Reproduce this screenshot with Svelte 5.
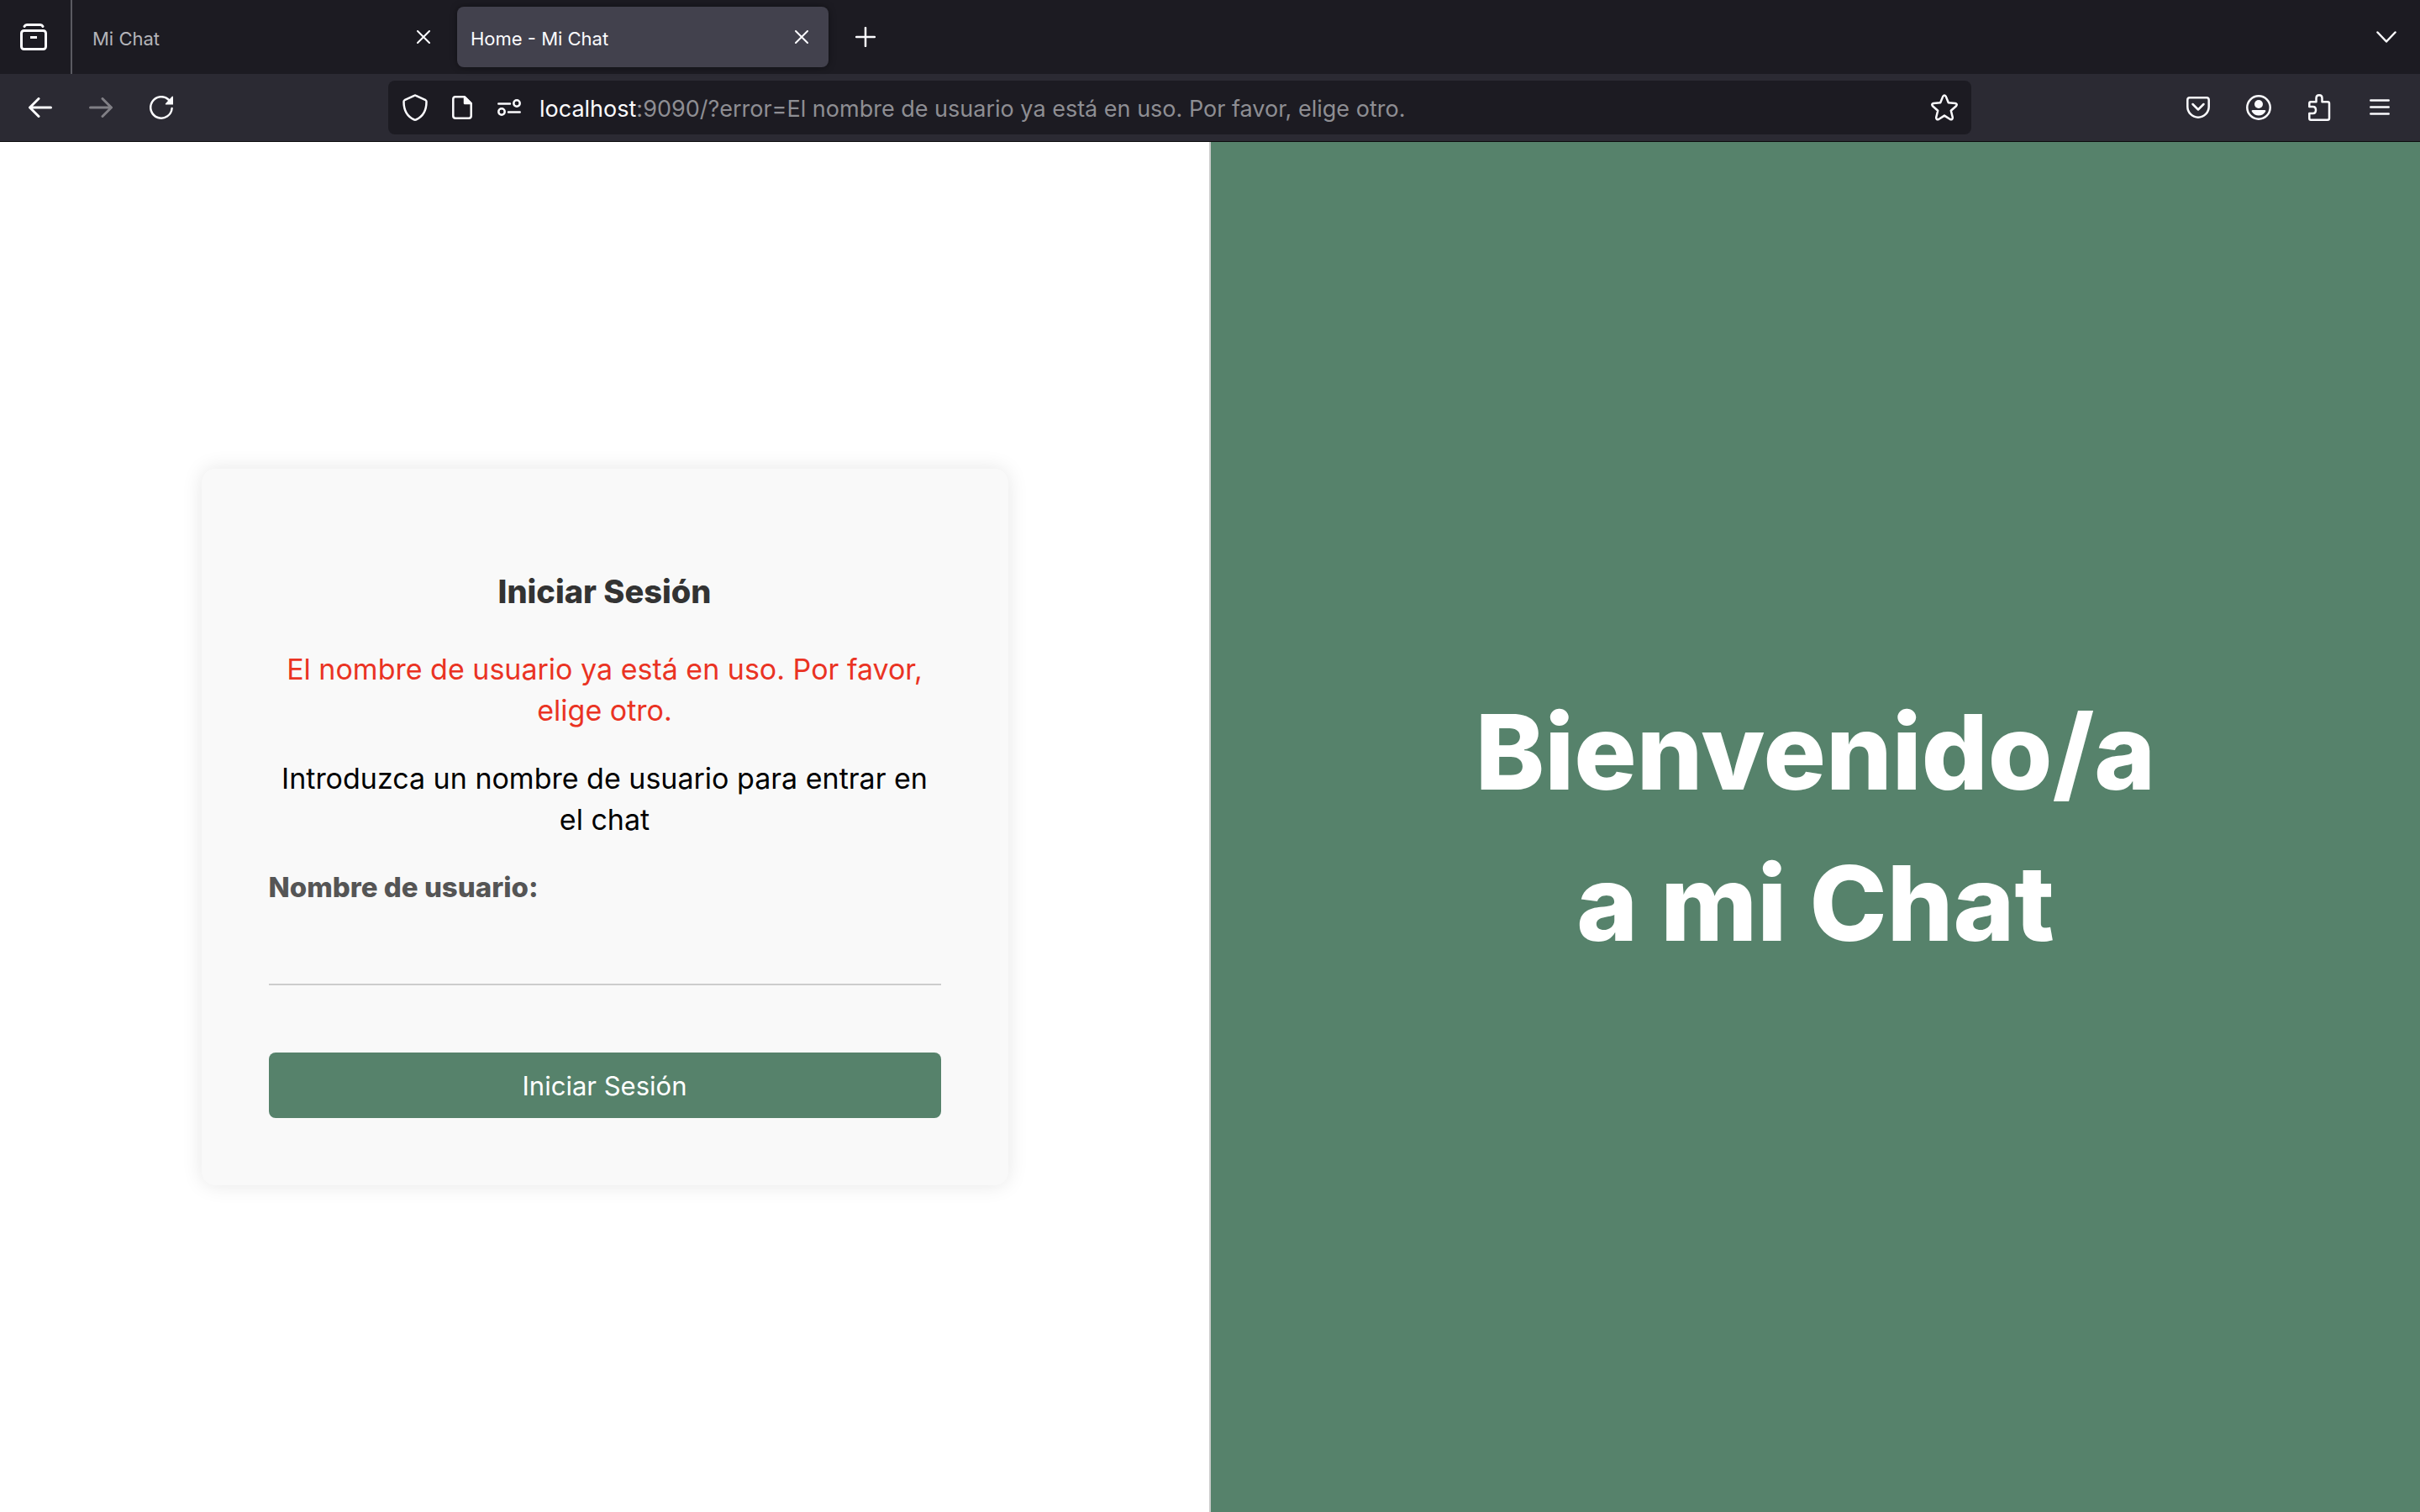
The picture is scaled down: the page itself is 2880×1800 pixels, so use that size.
<script>
  let username = $state('');
</script>

<div class="window">
  <header class="chrome">
    <div class="tabs">
      <button class="view" aria-label="Firefox View">
        <svg width="32" height="32" viewBox="0 0 32 32" fill="none" stroke="currentColor" stroke-width="3" stroke-linecap="round">
          <path d="M5 3.5Q6 1.500 8 1.500H24Q26 1.500 27 3.500" />
          <rect x="1.500" y="8.500" width="29" height="22" rx="3" />
          <path d="M13.500 16.500h5" stroke-linecap="square" />
        </svg>
      </button>
      <div class="tab">
        <span>Mi Chat</span>
        <button class="close" aria-label="Cerrar Mi Chat">
          <svg width="16" height="16" viewBox="0 0 16 16" fill="none" stroke="currentColor" stroke-width="2" stroke-linecap="round"><path d="M1 1l14 14M15 1L1 15" /></svg>
        </button>
      </div>
      <div class="tab active">
        <span>Home - Mi Chat</span>
        <button class="close" aria-label="Cerrar Home - Mi Chat">
          <svg width="16" height="16" viewBox="0 0 16 16" fill="none" stroke="currentColor" stroke-width="2" stroke-linecap="round"><path d="M1 1l14 14M15 1L1 15" /></svg>
        </button>
      </div>
      <button class="tool" aria-label="Nueva pestaña">
        <svg width="24" height="24" viewBox="0 0 24 24" fill="none" stroke="currentColor" stroke-width="2.500" stroke-linecap="round"><path d="M12 1v22M1 12h22" /></svg>
      </button>
      <button class="tool last" aria-label="Listar pestañas">
        <svg width="24" height="14" viewBox="0 0 24 14" fill="none" stroke="currentColor" stroke-width="2.500" stroke-linecap="round" stroke-linejoin="round"><path d="M1.500 1.500L12 12.500L22.500 1.500" /></svg>
      </button>
    </div>

    <div class="toolbar">
      <nav class="nav">
        <button class="tool" aria-label="Atrás">
          <svg width="28" height="24" viewBox="0 0 28 24" fill="none" stroke="currentColor" stroke-width="3" stroke-linecap="round" stroke-linejoin="round"><path d="M26.500 12H2M12 1.500L1.500 12L12 22.500" /></svg>
        </button>
        <button class="tool" aria-label="Adelante" disabled>
          <svg width="28" height="24" viewBox="0 0 28 24" fill="none" stroke="currentColor" stroke-width="3" stroke-linecap="round" stroke-linejoin="round"><path d="M1.500 12H26M16 1.500L26.500 12L16 22.500" /></svg>
        </button>
        <button class="tool" aria-label="Recargar">
          <svg width="28" height="28" viewBox="0 0 28 28" fill="none" stroke="currentColor" stroke-width="2.500" stroke-linecap="round"><path d="M26.600 15A12.700 12.700 0 1 1 23 5" /><path d="M28 1.300V10.500H19.200Q18.300 10 19 9.200L26.800 .8Q27.800 .2 28 1.300Z" fill="currentColor" stroke="none" /></svg>
        </button>
      </nav>
      <div class="urlbar">
        <button aria-label="Protección">
          <svg width="32" height="32" viewBox="0 0 32 32" fill="none" stroke="currentColor" stroke-width="2.500" stroke-linejoin="round"><path d="M15 1.800Q16 1.200 17 1.800L28.500 7.200Q29.500 7.800 29.500 9C29.500 19 26 26.500 17 30.500Q16 31 15 30.500C6 26.500 2.500 19 2.500 9Q2.500 7.800 3.500 7.200Z" /></svg>
        </button>
        <button aria-label="Información del sitio">
          <svg width="24" height="28" viewBox="0 0 24 28" fill="none" stroke="currentColor" stroke-width="2.500" stroke-linejoin="round"><path d="M4 1.300H14.500L22.700 9.500V24Q22.700 26.700 20 26.700H4Q1.300 26.700 1.300 24V4Q1.300 1.300 4 1.300Z" /><path d="M15 1.500V9H22.500Z" fill="currentColor" /></svg>
        </button>
        <button aria-label="Permisos">
          <svg width="28" height="20" viewBox="0 0 28 20" fill="none" stroke="currentColor" stroke-width="2.500" stroke-linecap="round"><path d="M1.300 5.500H15M13 15.500H26.700" /><circle cx="23" cy="5" r="3.700" /><circle cx="5" cy="15" r="3.700" /></svg>
        </button>
        <p class="address"><b>localhost</b>:9090/?error=El nombre de usuario ya está en uso. Por favor, elige otro.</p>
        <button aria-label="Añadir marcador">
          <svg width="32" height="32" viewBox="0 0 32 32" fill="none" stroke="currentColor" stroke-width="2.500" stroke-linejoin="round"><path d="M14.300 2.600Q16 .2 17.700 2.600L20.800 10.200L29 11Q31.800 11.800 30 14.300L23.800 19.800L25.800 27.800Q25.800 31 22.800 30L16 25.600L9.200 30Q6.200 31 6.200 27.800L8.200 19.800L2 14.300Q.2 11.800 3 11L11.200 10.200Z" /></svg>
        </button>
      </div>
      <div class="actions">
        <button class="tool" aria-label="Pocket">
          <svg width="28" height="26" viewBox="0 0 28 26" fill="none" stroke="currentColor" stroke-width="2.500" stroke-linecap="round" stroke-linejoin="round"><path d="M4 1.300H24Q26.700 1.300 26.700 4V12A12.700 12.700 0 0 1 1.300 12V4Q1.300 1.300 4 1.300Z" /><path d="M7.500 9L14 15.500L20.500 9" /></svg>
        </button>
        <button class="tool" aria-label="Cuenta">
          <svg width="30" height="30" viewBox="0 0 30 30"><circle cx="15" cy="15" r="13.700" fill="none" stroke="currentColor" stroke-width="2.500" /><circle cx="15" cy="11" r="5" fill="currentColor" /><path d="M8 18H22Q24 18 23 20Q20 24.500 15 24.500T7 20Q6 18 8 18Z" fill="currentColor" /></svg>
        </button>
        <button class="tool" aria-label="Extensiones">
          <svg width="28" height="32" viewBox="0 0 28 32" fill="none" stroke="currentColor" stroke-width="2.500" stroke-linejoin="round"><path d="M2.300 15V11Q2.300 9.300 4 9.300H10.500V5Q10.500 1.300 14 1.300T17.500 5V9.300H24Q26 9.300 26 11.300V28.700Q26 30.700 24 30.700H4Q2.300 30.700 2.300 28.700V23H6.500Q10 23 10 19T6.500 15Z" /></svg>
        </button>
        <button class="tool" aria-label="Menú">
          <svg width="24" height="20" viewBox="0 0 24 20" fill="none" stroke="currentColor" stroke-width="2.500" stroke-linecap="round"><path d="M1.300 1.500H22.700M1.300 9.500H22.700M1.300 17.500H22.700" /></svg>
        </button>
      </div>
    </div>
  </header>

  <main>
    <section class="login">
      <form class="card" onsubmit={(e) => e.preventDefault()}>
        <h2>Iniciar Sesión</h2>
        <p class="error">El nombre de usuario ya está en uso. Por favor, elige otro.</p>
        <p>Introduzca un nombre de usuario para entrar en el chat</p>
        <label for="username">Nombre de usuario:</label>
        <input id="username" type="text" bind:value={username} />
        <button class="submit" type="submit">Iniciar Sesión</button>
      </form>
    </section>
    <section class="welcome">
      <h1>Bienvenido/a a mi Chat</h1>
    </section>
  </main>
</div>

<style>
  :global(body) {
    margin: 0;
  }
  .window {
    display: flex;
    flex-direction: column;
    min-height: 100vh;
    font-family: Inter, 'Liberation Sans', sans-serif;
  }
  button {
    display: flex;
    align-items: center;
    justify-content: center;
    flex: none;
    padding: 0;
    border: 0;
    background: none;
    color: inherit;
    font: inherit;
  }
  svg {
    display: block;
    flex: none;
  }
  .chrome {
    color: #fbfbfe;
    background: #1c1b22;
    border-bottom: 1px solid #0c0c0d;
  }
  .tabs {
    display: flex;
    align-items: center;
    height: 88px;
    font-size: 22px;
  }
  .tabs .view {
    box-sizing: border-box;
    width: 86px;
    height: 88px;
    padding-right: 4px;
    border-right: 2px solid #5b5b62;
  }
  .tab {
    display: flex;
    align-items: center;
    justify-content: space-between;
    box-sizing: border-box;
    width: 442px;
    height: 72px;
    padding: 0 16px;
    border-radius: 8px;
    line-height: 28px;
    color: #fbfbfe;
  }
  .tab span {
    padding-top: 3px;
  }
  .tab:not(.active) {
    margin: 0 8px;
  }
  .tab:not(.active) span {
    color: #b4b4b9;
  }
  .tab.active {
    background: #42414d;
    box-shadow: 0 0 8px rgba(0, 0, 0, 0.4);
  }
  .tab .close {
    width: 32px;
    height: 32px;
  }
  .tool {
    width: 72px;
    height: 64px;
  }
  .tabs .tool {
    margin-left: 8px;
  }
  .tabs .last {
    margin-left: auto;
    margin-right: 4px;
  }
  .toolbar {
    display: flex;
    align-items: center;
    justify-content: space-between;
    height: 80px;
    padding: 0 12px;
    background: #2b2a33;
  }
  .nav,
  .actions {
    display: flex;
  }
  .nav .tool:disabled {
    color: #807f85;
  }
  .nav {
    width: 450px;
  }
  .actions {
    width: 522px;
    justify-content: flex-end;
  }
  .urlbar {
    display: flex;
    align-items: center;
    flex: 1;
    box-sizing: border-box;
    height: 64px;
    padding: 0 4px;
    border-radius: 8px;
    background: #1c1b22;
  }
  .urlbar button {
    width: 56px;
    height: 56px;
  }
  .address {
    flex: 1;
    margin: 0 0 0 8px;
    padding-top: 3px;
    font-size: 27px;
    line-height: 36px;
    color: #8e8e93;
  }
  .address b {
    font-weight: 400;
    color: #fbfbfe;
  }
  main {
    display: grid;
    grid-template-columns: 1fr 1fr;
    flex: 1;
  }
  .login {
    display: flex;
    align-items: center;
    justify-content: center;
    border-right: 1px solid #ccc;
    background: #fff;
  }
  .card {
    display: flex;
    flex-direction: column;
    box-sizing: border-box;
    width: 960px;
    padding: 80px;
    border-radius: 16px;
    background: #f9f9f9;
    box-shadow: 0 0 24px rgba(0, 0, 0, 0.1);
    text-align: center;
    font-size: 34px;
    line-height: 49px;
  }
  h2 {
    margin: 36px 0 38px;
    font-size: 38px;
    font-weight: 800;
    line-height: 60px;
    color: #333;
  }
  .card p {
    margin: 0 0 32px;
    color: #000;
  }
  .card .error {
    color: #ea3323;
  }
  label {
    text-align: left;
    font-size: 33px;
    font-weight: 800;
    color: #555;
  }
  input {
    height: 74px;
    margin: 16px 0 80px;
    padding: 0 16px;
    border: 0;
    border-bottom: 2px solid #ccc;
    background: none;
    font: inherit;
    outline: none;
  }
  .submit {
    height: 78px;
    border-radius: 8px;
    background: #56826b;
    font-size: 31px;
    color: #fff;
  }
  .welcome {
    display: flex;
    align-items: center;
    justify-content: center;
    padding: 0 280px;
    border-left: 1px solid #ccc;
    background: #56826b;
  }
  h1 {
    margin: 0;
    font-size: 124px;
    font-weight: 800;
    line-height: 180px;
    text-align: center;
    color: #fff;
  }
</style>
